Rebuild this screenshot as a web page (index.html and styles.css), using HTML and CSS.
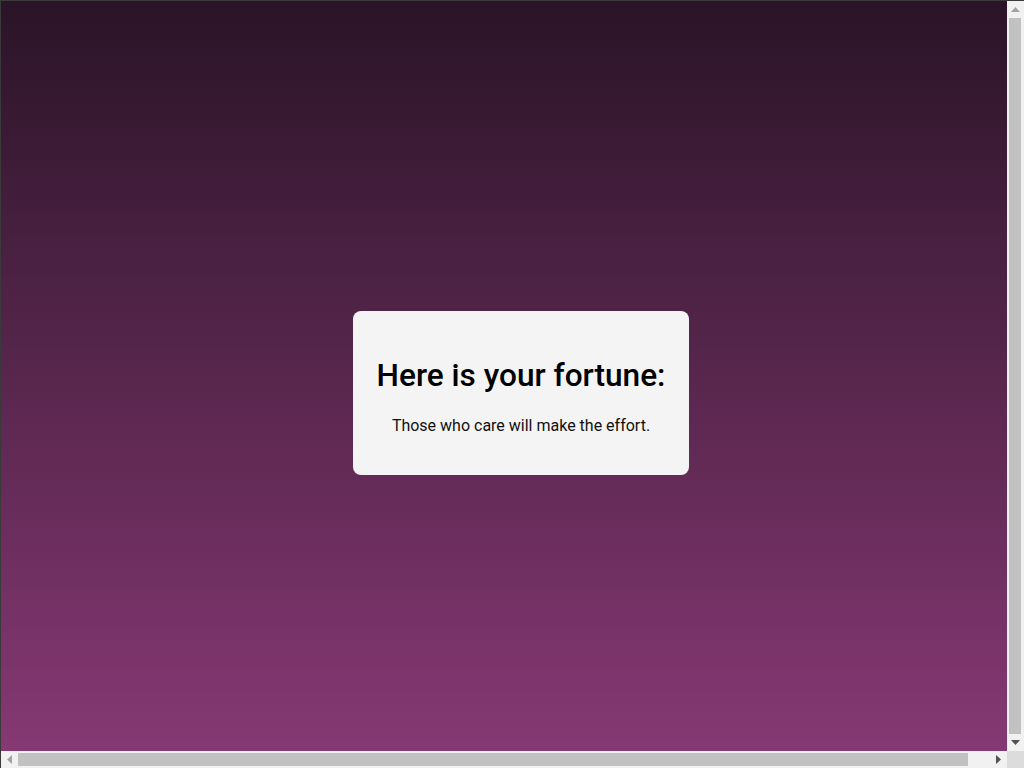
FILE: index.html
```html
<!DOCTYPE html>
<html lang="en">
<head>
<meta charset="utf-8">
<title>Fortune</title>
<link rel="stylesheet" href="styles.css">
</head>
<body>
  <main class="card">
    <h1 class="card-title">Here is your fortune:</h1>
    <p class="card-text">Those who care will make the effort.</p>
  </main>

  <div class="sb sb-v" aria-hidden="true">
    <span class="sb-btn"><svg width="9" height="5" viewBox="0 0 9 5"><polygon points="0,5 9,5 4.5,0" fill="#a3a3a3"/></svg></span>
    <span class="sb-track"><span class="sb-thumb"></span></span>
    <span class="sb-btn"><svg width="9" height="5" viewBox="0 0 9 5"><polygon points="0,0 9,0 4.5,5" fill="#505050"/></svg></span>
  </div>
  <div class="sb sb-h" aria-hidden="true">
    <span class="sb-btn"><svg width="5" height="9" viewBox="0 0 5 9"><polygon points="5,0 5,9 0,4.5" fill="#a3a3a3"/></svg></span>
    <span class="sb-track"><span class="sb-thumb"></span></span>
    <span class="sb-btn"><svg width="5" height="9" viewBox="0 0 5 9"><polygon points="0,0 0,9 5,4.5" fill="#505050"/></svg></span>
  </div>
  <div class="sb-corner" aria-hidden="true"></div>
</body>
</html>
```
FILE: styles.css
```css
html {
  background: linear-gradient(to bottom, #2a1427 0%, #8a3a77 100%);
  min-height: 100%;
  border-top: 1px solid #3a3a3a;
  border-left: 1px solid #3a3a3a;
}

body {
  margin: 8px;
  width: 100vw;
  height: 100vh;
  display: flex;
  align-items: center;
  justify-content: center;
  font-family: Roboto, "Liberation Sans", sans-serif;
}

.card {
  background: #f4f4f4;
  border-radius: 8px;
  padding: 24px;
  text-align: center;
}

.card-title {
  font-size: 31.6px;
  font-weight: 500;
  margin: 21.44px 0;
  line-height: 37.5px;
  color: #000;
}

.card-text {
  font-size: 16px;
  margin: 16px 0;
  color: #111;
}

/* browser scrollbars */
.sb {
  position: fixed;
  display: flex;
  background: #f1f1f1;
}

.sb-v {
  top: 1px;
  right: 0;
  width: 17px;
  bottom: 17px;
  flex-direction: column;
}

.sb-h {
  left: 1px;
  bottom: 0;
  height: 17px;
  right: 17px;
  flex-direction: row;
}

.sb-btn {
  flex: 0 0 17px;
  display: flex;
  align-items: center;
  justify-content: center;
}

.sb-track {
  flex: 1;
  display: flex;
  padding: 0 2px;
}

.sb-h .sb-track {
  padding: 2px 0;
}

.sb-thumb {
  background: #c1c1c1;
}

.sb-v .sb-thumb {
  flex: 0 0 95.8%;
  width: 100%;
}

.sb-h .sb-thumb {
  flex: 0 0 97.7%;
  height: 100%;
}

.sb-corner {
  position: fixed;
  right: 0;
  bottom: 0;
  width: 17px;
  height: 17px;
  background: #dcdcdc;
}
```
